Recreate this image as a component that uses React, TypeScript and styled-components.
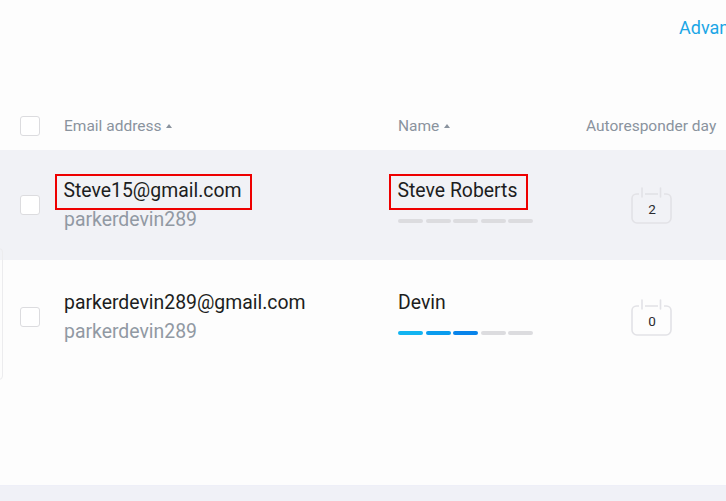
import React from "react";
import styled, { createGlobalStyle } from "styled-components";

const Global = createGlobalStyle`
  html, body { margin: 0; padding: 0; overflow: hidden; }
  body { font-family: Roboto, "Liberation Sans", Arial, sans-serif; background: #fdfdfd; }
`;

const Page = styled.div`
  position: relative;
  width: 726px;
  height: 501px;
  background: #fdfdfd;
  display: flex;
  flex-direction: column;
  overflow: hidden;
`;

const TopBar = styled.div`
  height: 102px;
  display: flex;
  align-items: flex-start;
  padding: 17px 0 0 679px;
  box-sizing: border-box;
`;

const TopLink = styled.a`
  color: #1ba6e6;
  font-size: 18px;
  white-space: nowrap;
  text-decoration: none;
  line-height: 22px;
`;

const Row = styled.div<{ $h: number; $bg: string }>`
  display: grid;
  grid-template-columns: 44px 334px 188px 1fr;
  align-items: center;
  height: ${(p) => p.$h}px;
  padding-left: 20px;
  background: ${(p) => p.$bg};
  box-sizing: border-box;
`;

const Check = styled.span`
  display: block;
  width: 18px;
  height: 18px;
  border: 1.5px solid #dcdcdf;
  border-radius: 3px;
  background: #fff;
`;

const HeadLabel = styled.div`
  display: flex;
  align-items: center;
  gap: 5px;
  color: #8a939e;
  font-size: 15.5px;
  white-space: nowrap;
`;

const Caret = styled.span`
  width: 0;
  height: 0;
  border-left: 3.5px solid transparent;
  border-right: 3.5px solid transparent;
  border-bottom: 4px solid #8a939e;
  margin-top: -1px;
`;

const Cell = styled.div<{ $shift?: number }>`
  display: flex;
  flex-direction: column;
  align-items: flex-start;
  margin-top: ${(p) => p.$shift ?? 0}px;
`;

const Primary = styled.div<{ $marked?: boolean }>`
  color: #1c1d21;
  font-size: 19.4px;
  line-height: 23px;
  white-space: nowrap;
  ${(p) =>
    p.$marked
      ? `border: 2.5px solid #ee0000; padding: 3px 9px 6px 6.5px; margin: -5.5px 0 -8.5px -9px;`
      : ``}
`;

const Secondary = styled.div`
  color: #9199a3;
  font-size: 19.4px;
  line-height: 23px;
  margin-top: 6px;
  white-space: nowrap;
`;

const Bars = styled.div`
  display: flex;
  gap: 2.5px;
  margin-top: 17px;
`;

const Seg = styled.span<{ $c: string }>`
  display: block;
  width: 25px;
  height: 4.5px;
  border-radius: 3px;
  background: ${(p) => p.$c};
`;

const CalWrap = styled.div`
  position: relative;
  width: 42px;
  height: 38px;
  margin-left: 45px;
  display: flex;
  align-items: flex-end;
  justify-content: center;
`;

const CalNum = styled.span`
  position: absolute;
  left: 0;
  right: 0;
  bottom: 7px;
  text-align: center;
  font-size: 13.5px;
  color: #2a2b30;
`;

const BottomStrip = styled.div`
  margin-top: auto;
  height: 15px;
  background: #f0f1f7;
  border-top: 1px solid #eeeff8;
`;

const EdgeLine = styled.div`
  position: absolute;
  left: -3px;
  top: 248px;
  width: 4px;
  height: 130px;
  border: 1px solid #ececee;
  border-radius: 0 4px 4px 0;
`;

function Calendar({ n }: { n: number }) {
  return (
    <CalWrap>
      <svg width="42" height="38" viewBox="0 0 42 38" fill="none">
        <path
          d="M8 8 H5.5 A4.5 4.5 0 0 0 1 12.5 V32 A5 5 0 0 0 6 37 H35 A5 5 0 0 0 40 32 V12.5 A4.5 4.5 0 0 0 35.5 8 H33"
          stroke="#e2e2e6"
          strokeWidth="1.6"
        />
        <path d="M14 8 H27" stroke="#e2e2e6" strokeWidth="1.6" />
        <path d="M11 2 V11 M29.5 2 V11" stroke="#e2e2e6" strokeWidth="1.6" strokeLinecap="round" />
      </svg>
      <CalNum>{n}</CalNum>
    </CalWrap>
  );
}

const blueSteps = ["#12b4f1", "#0a9cee", "#0884ea"];
const grey = "#dcdcdf";

function Progress({ filled }: { filled: number }) {
  return (
    <Bars>
      {[0, 1, 2, 3, 4].map((i) => (
        <Seg key={i} $c={i < filled ? blueSteps[i] ?? "#0884ea" : grey} />
      ))}
    </Bars>
  );
}

type Contact = {
  email: string;
  user: string;
  name: string;
  day: number;
  filled: number;
  marked: boolean;
};

const contacts: Contact[] = [
  { email: "Steve15@gmail.com", user: "parkerdevin289", name: "Steve Roberts", day: 2, filled: 0, marked: true },
  { email: "parkerdevin289@gmail.com", user: "parkerdevin289", name: "Devin", day: 0, filled: 3, marked: false },
];

export default function App() {
  return (
    <>
      <Global />
      <Page>
        <TopBar>
          <TopLink href="#">Advanced search</TopLink>
        </TopBar>
        <Row $h={48} $bg="transparent">
          <Check />
          <HeadLabel>
            Email address <Caret />
          </HeadLabel>
          <HeadLabel>
            Name <Caret />
          </HeadLabel>
          <HeadLabel>Autoresponder day</HeadLabel>
        </Row>
        {contacts.map((c, i) => (
          <Row key={c.email} $h={i === 0 ? 110 : 113} $bg={i === 0 ? "#f1f2f6" : "#fdfdfd"}>
            <Check />
            <Cell $shift={0}>
              <Primary $marked={c.marked}>{c.email}</Primary>
              <Secondary>{c.user}</Secondary>
            </Cell>
            <Cell $shift={-7}>
              <Primary $marked={c.marked}>{c.name}</Primary>
              <Progress filled={c.filled} />
            </Cell>
            <Calendar n={c.day} />
          </Row>
        ))}
        <BottomStrip />
        <EdgeLine />
      </Page>
    </>
  );
}
